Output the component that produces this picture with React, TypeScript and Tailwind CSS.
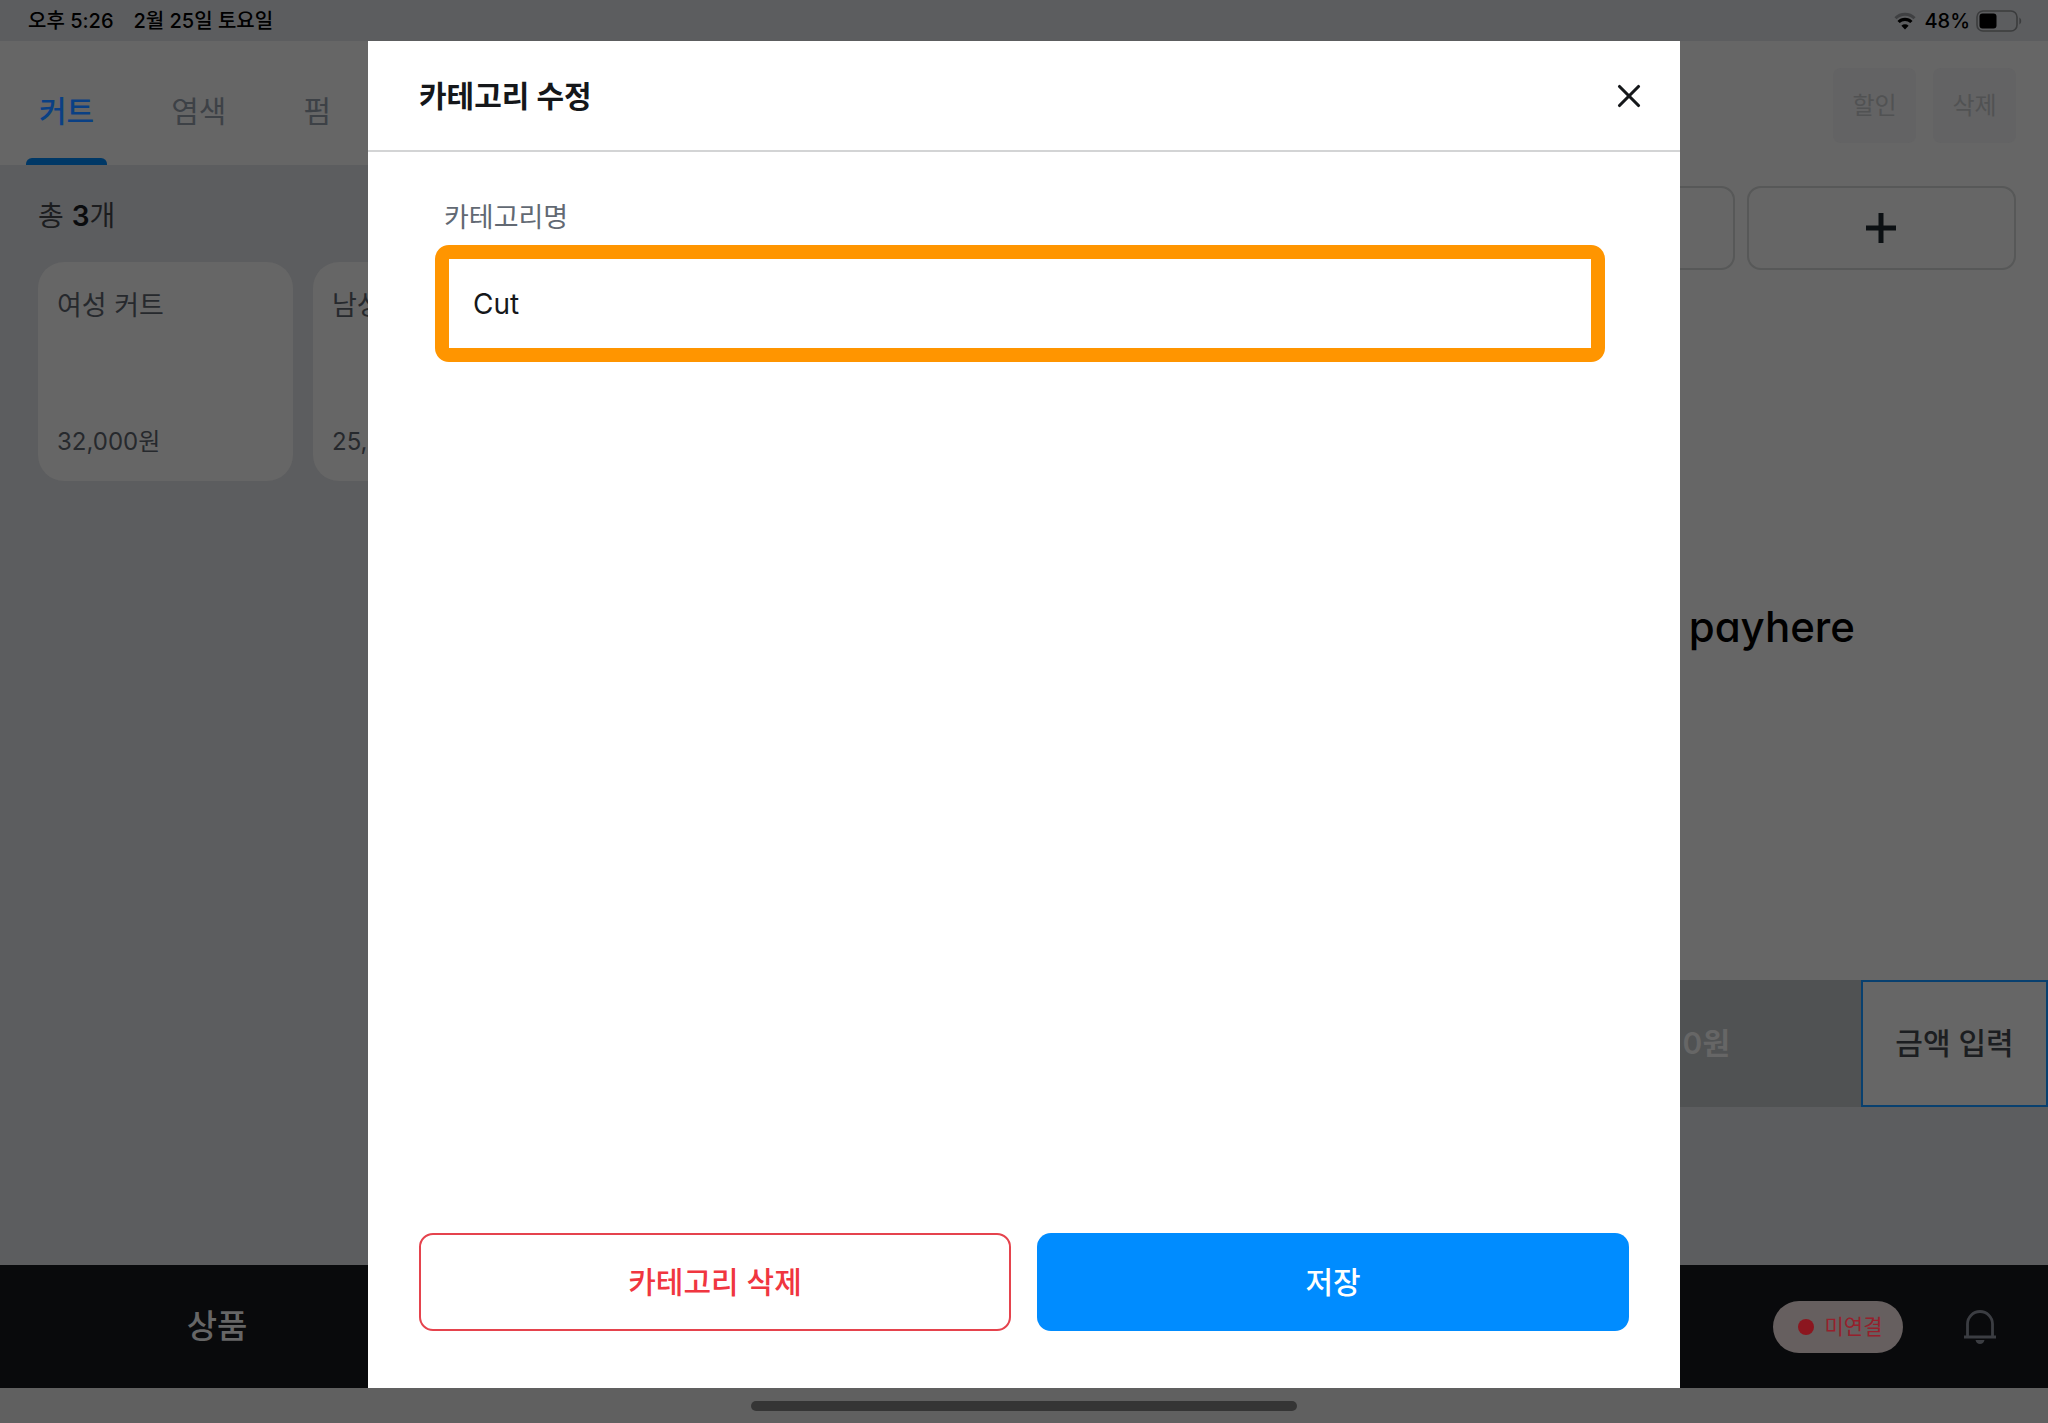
import React, { useState } from 'react';
import { X } from 'lucide-react';

const categories = ['커트', '염색', '펌'];

const products = [
  { name: '여성 커트', price: '32,000원' },
  { name: '남성 커트', price: '25,000원' },
];

const WifiIcon: React.FC = () => (
  <svg viewBox="0 0 22 18" className="h-[18px] w-[22px]" fill="none" aria-hidden="true">
    <path d="M1.5 6.2a13.4 13.4 0 0 1 19 0" stroke="#3f4042" strokeWidth="3" />
    <path d="M4.6 10a9 9 0 0 1 12.8 0" stroke="#000" strokeWidth="3.2" />
    <path d="M11 17.5 7.4 13.8a5.1 5.1 0 0 1 7.2 0Z" fill="#000" />
  </svg>
);

const BatteryIcon: React.FC = () => (
  <svg viewBox="0 0 46 22" className="h-[22px] w-[46px]" fill="none" aria-hidden="true">
    <rect x="1" y="1" width="40" height="20" rx="6" stroke="#3b3c3d" strokeWidth="1.6" />
    <rect x="3.5" y="3.5" width="17" height="15" rx="3" fill="#000" />
    <path d="M43.4 7.5c2.4 1.4 2.4 5.6 0 7Z" fill="#3b3c3d" />
  </svg>
);

const BellIcon: React.FC = () => (
  <svg viewBox="0 0 32 36" className="h-9 w-8" fill="none" aria-hidden="true">
    <path d="M3.5 27V15a12.5 12.5 0 0 1 25 0v12" stroke="#3b3d42" strokeWidth="2.8" />
    <path d="M0 28h32" stroke="#3b3d42" strokeWidth="3" />
    <path d="M11.5 31h9c-.6 2.4-2.2 4-4.5 4s-3.9-1.6-4.5-4Z" fill="#3b3d42" />
  </svg>
);

const StatusBar: React.FC = () => (
  <div className="flex h-[41px] shrink-0 items-center justify-between bg-[#5c5d5f] pl-7 pr-[26px] text-[20px] font-medium leading-6 text-black">
    <div className="flex gap-5">
      <span>오후 5:26</span>
      <span>2월 25일 토요일</span>
    </div>
    <div className="flex items-center">
      <WifiIcon />
      <span className="ml-2 mr-[6px]">48%</span>
      <BatteryIcon />
    </div>
  </div>
);

const ProductPanel: React.FC = () => (
  <section className="flex min-w-0 flex-1 flex-col bg-[#5c5d5f]">
    <nav className="flex h-[124px] gap-[51px] bg-[#666666] pl-[26px] text-[30px]">
      {categories.map((category, index) => (
        <button
          key={category}
          className={
            index === 0 ? 'flex flex-col font-medium text-[#0a4084]' : 'flex flex-col text-[#3d4146]'
          }
        >
          <span className="flex flex-1 items-center px-[13px] pt-6">{category}</span>
          <span className={index === 0 ? 'h-[7px] w-full rounded-t-md bg-[#003866]' : 'h-[7px] w-full'} />
        </button>
      ))}
    </nav>
    <div className="px-[38px] pt-[31px]">
      <p className="text-[28px] leading-10 text-[#1c1d1f]">
        총 <strong className="font-semibold text-[#0a0b0d]">3</strong>개
      </p>
      <ul className="mt-[26px] flex gap-5">
        {products.map((product) => (
          <li
            key={product.name}
            className="flex h-[219px] w-[255px] flex-col justify-between rounded-[26px] bg-[#666666] px-[19px] pb-[19px] pt-6 text-[#26292d]"
          >
            <span className="text-[27px] leading-10">{product.name}</span>
            <span className="text-[24px] leading-10">{product.price}</span>
          </li>
        ))}
      </ul>
    </div>
  </section>
);

const OrderPanel: React.FC = () => (
  <section className="flex w-[30%] flex-col bg-[#666666]">
    <div className="flex justify-end gap-[17px] px-8 pt-[27px] text-[24px] text-[#515253]">
      <button className="h-[75px] w-[83px] rounded-lg bg-[#636364]">할인</button>
      <button className="h-[75px] w-[83px] rounded-lg bg-[#636364]">삭제</button>
    </div>
    <div className="mt-[43px] grid grid-cols-2 gap-3 px-8">
      <button aria-label="빈 주문" className="h-[84px] rounded-[14px] border-2 border-[#575858]" />
      <button
        aria-label="주문 추가"
        className="flex h-[84px] items-center justify-center rounded-[14px] border-2 border-[#575858]"
      >
        <svg viewBox="0 0 30 30" className="h-[30px] w-[30px]" aria-hidden="true">
          <path d="M15 0v30M0 15h30" stroke="#0c1013" strokeWidth="5" />
        </svg>
      </button>
    </div>
    <div className="flex flex-1 items-center justify-end pr-[193px] pt-1">
      <span className="text-[42px] font-medium leading-[52px] text-black [font-feature-settings:'cv11']">
        payhere
      </span>
    </div>
    <div className="flex h-[127px] text-[30px]">
      <div className="flex flex-1 items-center justify-end bg-[#505253] pr-[131px] font-semibold text-[#666666]">
        0원
      </div>
      <button className="w-[187px] border-2 border-[#08406f] font-medium text-[#1c1e21]">금액 입력</button>
    </div>
    <div className="h-[158px] bg-[#5c5d5f]" />
  </section>
);

const BottomBar: React.FC = () => (
  <footer className="flex h-[123px] shrink-0 items-center justify-between bg-[#090a0c] pr-[52px]">
    <a href="#products" className="w-[434px] text-center text-[33px] font-medium text-[#666666]">
      상품
    </a>
    <div className="flex items-center gap-[61px]">
      <button className="flex h-[52px] w-[130px] items-center justify-center gap-[11px] rounded-full bg-[#665f5f] pl-1 text-[21px] text-[#96202c]">
        <span className="h-4 w-4 rounded-full bg-[#8c161f]" />
        미연결
      </button>
      <button aria-label="알림">
        <BellIcon />
      </button>
    </div>
  </footer>
);

const CategoryModal: React.FC = () => {
  const [name, setName] = useState('Cut');

  return (
    <div
      role="dialog"
      aria-labelledby="category-title"
      className="flex w-[1312px] max-w-full flex-col bg-white text-[#15171a]"
    >
      <header className="flex h-[111px] items-center justify-between border-b-2 border-[#d3d4d5] pl-[51px] pr-8">
        <h2 id="category-title" className="text-[30px] font-bold leading-10">
          카테고리 수정
        </h2>
        <button aria-label="닫기">
          <X size={38} strokeWidth={2} />
        </button>
      </header>
      <div className="flex flex-1 flex-col pl-[67px] pr-[75px] pt-[46px]">
        <label htmlFor="category-name" className="pl-[9px] text-[27px] leading-10 text-[#626973]">
          카테고리명
        </label>
        <input
          id="category-name"
          type="text"
          value={name}
          onChange={(e) => setName(e.target.value)}
          className="mt-[7px] h-[117px] w-full rounded-[14px] border-[14px] border-[#ff9500] px-6 text-[28px] outline-none"
        />
      </div>
      <div className="grid grid-cols-2 gap-[26px] px-[51px] pb-[57px] text-[30px] font-medium">
        <button className="h-[98px] rounded-[14px] border-2 border-[#e5434d] text-[#f03640]">카테고리 삭제</button>
        <button className="h-[98px] rounded-[14px] bg-[#008cff] text-white">저장</button>
      </div>
    </div>
  );
};

const App: React.FC = () => {
  return (
    <div className="relative flex h-screen flex-col overflow-hidden bg-[#606060] font-['Inter','Noto_Sans_CJK_KR',sans-serif]">
      <StatusBar />
      <main className="flex min-h-0 flex-1">
        <ProductPanel />
        <OrderPanel />
      </main>
      <BottomBar />
      <div className="flex h-[35px] shrink-0 items-center justify-center">
        <div className="h-[10px] w-[546px] rounded-full bg-[#353535]" />
      </div>

      {/* Category modal over the sales screen */}
      <div className="absolute inset-x-0 bottom-[35px] top-[41px] flex justify-center">
        <CategoryModal />
      </div>
    </div>
  );
};

export default App;
